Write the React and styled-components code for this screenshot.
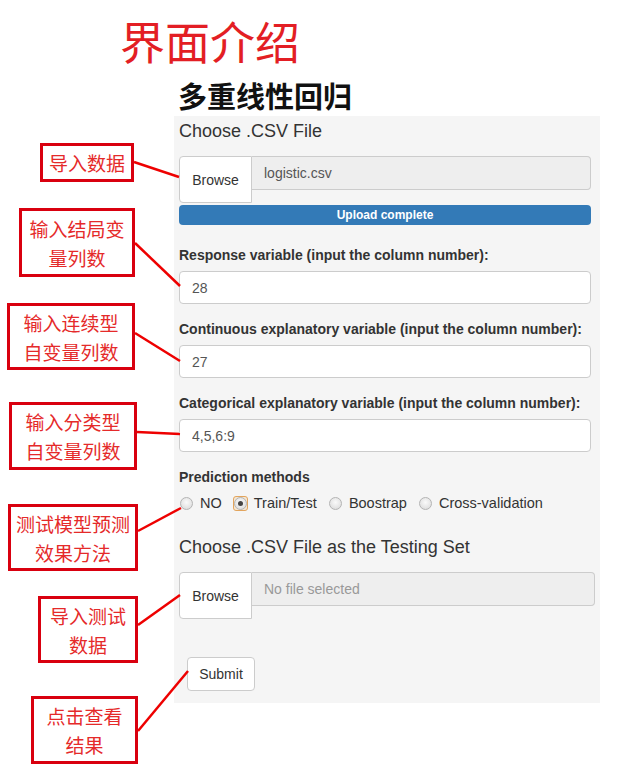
import React from 'react';
import styled, { createGlobalStyle } from 'styled-components';

const GlobalStyle = createGlobalStyle`
  html, body {
    margin: 0;
    padding: 0;
    background: #fff;
  }
  body {
    font-family: "Liberation Sans", Arial, sans-serif;
    color: #333;
  }
`;

const Page = styled.div`
  position: relative;
  width: 617px;
  height: 776px;
  overflow: hidden;
`;

const Title = styled.h1`
  margin: 16px 0 0 120px;
  font-family: "Noto Sans CJK SC", sans-serif;
  font-weight: 400;
  font-size: 45px;
  line-height: 50px;
  color: #e31e24;
`;

const Subtitle = styled.h2`
  margin: 12px 0 0 178px;
  font-family: "Noto Sans CJK SC", sans-serif;
  font-weight: 700;
  font-size: 29px;
  line-height: 34px;
  color: #111;
`;

const Panel = styled.div`
  margin: 4px 0 0 174px;
  width: 426px;
  box-sizing: border-box;
  padding: 5px 9px 12px 5px;
  background: #f5f5f5;
`;

const SectionTitle = styled.h4`
  margin: 0 0 15px;
  font-size: 18px;
  font-weight: 400;
  line-height: 20px;
  color: #333;
`;

const FileGroup = styled.div`
  display: flex;
  align-items: flex-start;
  margin-right: ${(p) => (p.$wide ? '-4px' : '0')};
`;

const BrowseButton = styled.div`
  flex: none;
  width: 73px;
  height: 47px;
  box-sizing: border-box;
  display: flex;
  align-items: center;
  justify-content: center;
  background: #fff;
  border: 1px solid #ccc;
  border-radius: 4px 0 0 4px;
  font-size: 14px;
  color: #333;
`;

const FileName = styled.div`
  flex: 1;
  height: 34px;
  box-sizing: border-box;
  padding: 0 12px;
  line-height: 32px;
  background: #eee;
  border: 1px solid #ccc;
  border-left: none;
  border-radius: 0 4px 4px 0;
  font-size: 14px;
  color: ${(p) => (p.$empty ? '#999' : '#555')};
`;

const Progress = styled.div`
  margin: 2px 0 20px;
  height: 20px;
  line-height: 20px;
  border-radius: 4px;
  background: #337ab7;
  color: #fff;
  font-size: 12px;
  font-weight: 700;
  text-align: center;
`;

const Field = styled.div`
  margin-bottom: 15px;
`;

const Label = styled.label`
  display: block;
  margin-bottom: 6px;
  font-size: 14px;
  font-weight: 700;
  line-height: 20px;
  color: #333;
`;

const TextInput = styled.input`
  display: block;
  width: 100%;
  height: 33px;
  box-sizing: border-box;
  padding: 6px 12px;
  font-family: "Liberation Sans", Arial, sans-serif;
  font-size: 14px;
  color: #555;
  background: #fff;
  border: 1px solid #ccc;
  border-radius: 4px;
  outline: none;
`;

const RadioRow = styled.div`
  display: flex;
  align-items: center;
  margin: 6px 0 24px;
  line-height: 20px;
  font-size: 14.5px;
  color: #333;
`;

const Option = styled.span`
  display: flex;
  align-items: center;
  margin-right: 11px;
`;

const RadioMark = styled.span`
  position: relative;
  width: 15px;
  height: 15px;
  margin-right: 6px;
  box-sizing: border-box;
  border-radius: 3px;
  border: 1px solid ${(p) => (p.$checked ? '#e2a55e' : 'transparent')};
  background: ${(p) => (p.$checked ? '#f7e7d2' : 'transparent')};

  &::before {
    content: '';
    position: absolute;
    left: 0;
    top: 0;
    width: 13px;
    height: 13px;
    box-sizing: border-box;
    border-radius: 50%;
    border: 1px solid #b4b4b4;
    background: radial-gradient(circle at 50% 40%, #fafafa 0%, #e2e2e2 70%, #d2d2d2 100%);
  }

  &::after {
    content: '';
    display: ${(p) => (p.$checked ? 'block' : 'none')};
    position: absolute;
    left: 4px;
    top: 4px;
    width: 5px;
    height: 5px;
    border-radius: 50%;
    background: #444;
  }
`;

const SubmitButton = styled.button`
  display: block;
  margin: 38px 0 0 8px;
  width: 68px;
  height: 34px;
  padding: 0;
  font-family: "Liberation Sans", Arial, sans-serif;
  font-size: 14px;
  color: #333;
  background: #fff;
  border: 1px solid #ccc;
  border-radius: 4px;
`;

const Callout = styled.div`
  position: absolute;
  left: ${(p) => p.$x}px;
  top: ${(p) => p.$y}px;
  width: ${(p) => p.$w}px;
  height: ${(p) => p.$h}px;
  box-sizing: border-box;
  display: flex;
  flex-direction: column;
  justify-content: center;
  align-items: center;
  border: 3px solid #d9000f;
  background: #fff;
  font-family: "Noto Sans CJK SC", sans-serif;
  font-size: 19px;
  line-height: 29px;
  color: #e52a2a;
  white-space: nowrap;
`;

const Leaders = styled.svg`
  position: absolute;
  left: 0;
  top: 0;
  pointer-events: none;
`;

const callouts = [
  { x: 40, y: 143, w: 94, h: 39, lines: ['导入数据'] },
  { x: 19, y: 208, w: 116, h: 69, lines: ['输入结局变', '量列数'] },
  { x: 7, y: 303, w: 128, h: 67, lines: ['输入连续型', '自变量列数'] },
  { x: 9, y: 402, w: 128, h: 68, lines: ['输入分类型', '自变量列数'] },
  { x: 8, y: 504, w: 130, h: 67, lines: ['测试模型预测', '效果方法'] },
  { x: 38, y: 596, w: 100, h: 67, lines: ['导入测试', '数据'] },
  { x: 31, y: 696, w: 107, h: 68, lines: ['点击查看', '结果'] },
];

const leaders = [
  [134, 162, 179, 177],
  [135, 243, 180, 286],
  [135, 333, 180, 361],
  [137, 432, 180, 434],
  [138, 531, 181, 508],
  [138, 625, 180, 595],
  [138, 731, 188, 671],
];

const methods = ['NO', 'Train/Test', 'Boostrap', 'Cross-validation'];

const fields = [
  { label: 'Response variable (input the column number):', value: '28' },
  { label: 'Continuous explanatory variable (input the column number):', value: '27' },
  { label: 'Categorical explanatory variable (input the column number):', value: '4,5,6:9' },
];

const App = () => {
  return (
    <Page>
      <GlobalStyle />
      <Title>界面介绍</Title>
      <Subtitle>多重线性回归</Subtitle>

      <Panel>
        <SectionTitle>Choose .CSV File</SectionTitle>
        <FileGroup>
          <BrowseButton>Browse</BrowseButton>
          <FileName>logistic.csv</FileName>
        </FileGroup>
        <Progress>Upload complete</Progress>

        {fields.map((f) => (
          <Field key={f.label}>
            <Label>{f.label}</Label>
            <TextInput readOnly value={f.value} />
          </Field>
        ))}

        <Label>Prediction methods</Label>
        <RadioRow>
          {methods.map((m) => (
            <Option key={m}>
              <RadioMark $checked={m === 'Train/Test'} />
              {m}
            </Option>
          ))}
        </RadioRow>

        <SectionTitle>Choose .CSV File as the Testing Set</SectionTitle>
        <FileGroup $wide>
          <BrowseButton>Browse</BrowseButton>
          <FileName $empty>No file selected</FileName>
        </FileGroup>

        <SubmitButton>Submit</SubmitButton>
      </Panel>

      {callouts.map((c) => (
        <Callout key={c.lines.join('')} $x={c.x} $y={c.y} $w={c.w} $h={c.h}>
          {c.lines.map((l) => (
            <span key={l}>{l}</span>
          ))}
        </Callout>
      ))}

      <Leaders width="617" height="776">
        {leaders.map(([x1, y1, x2, y2]) => (
          <line key={`${x1}-${y1}`} x1={x1} y1={y1} x2={x2} y2={y2} stroke="#e00" strokeWidth="2.5" />
        ))}
      </Leaders>
    </Page>
  );
};

export default App;
